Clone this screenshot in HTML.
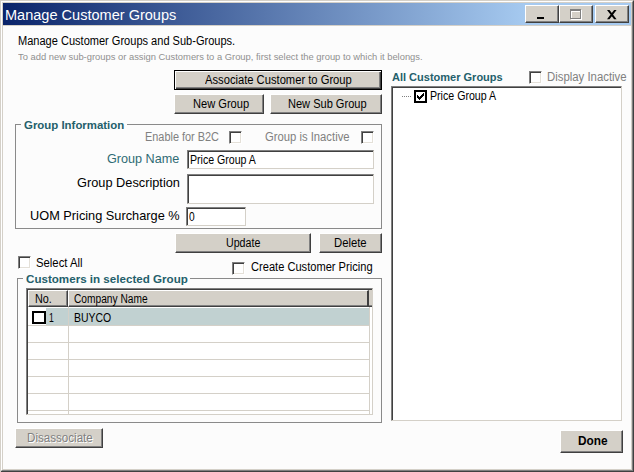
<!DOCTYPE html>
<html><head><meta charset="utf-8">
<style>
*{box-sizing:border-box;margin:0;padding:0}
html,body{width:634px;height:472px;overflow:hidden;background:#fcfcfc}
body{position:relative;font-family:"Liberation Sans",sans-serif;font-size:11.5px;color:#000}
.a{position:absolute}
.t{position:absolute;white-space:nowrap;line-height:16px;transform-origin:0 0}
.btn{position:absolute;background:#d4d0c8;border-style:solid;border-width:1px;border-color:#fff #404040 #404040 #fff;box-shadow:inset -1px -1px 0 #808080}
.cb{position:absolute;width:13px;height:13px;background:#fff;border-style:solid;border-width:1px;border-color:#808080 #fff #fff #808080;box-shadow:inset 1px 1px 0 #404040, inset -1px -1px 0 #e4e0d8}
.grp{position:absolute;border:1px solid #8a8a8a}
.tx{position:absolute;background:#fff;border-style:solid;border-width:1px;border-color:#808080 #d4d0c8 #d4d0c8 #808080;box-shadow:inset 1px 1px 0 #404040}
.gl{position:absolute;background:#d4d0c8}
</style></head><body>
<!-- window frame -->
<div class="a" style="left:0;top:0;width:634px;height:472px;border-style:solid;border-width:1px;border-color:#d4d0c8 #404040 #404040 #d4d0c8"></div>
<div class="a" style="left:1px;top:1px;width:632px;height:470px;border-style:solid;border-width:1px;border-color:#fff #808080 #808080 #fff"></div>
<div class="a" style="left:2px;top:2px;width:630px;height:468px;border:1px solid #d4d0c8"></div>
<div class="a" style="left:0;top:470px;width:1px;height:2px;background:#d4d0c8"></div>
<!-- title bar -->
<div class="a" style="left:3px;top:3px;width:628px;height:22px;background:linear-gradient(90deg,#0a246a 0,#a6caf0 524px,#a6caf0 100%)"></div>
<div class="a" style="left:3px;top:25px;width:628px;height:1px;background:#d4d0c8"></div>
<div class="btn" style="left:525px;top:5px;width:34px;height:18px"><div class="a" style="left:11px;top:11px;width:7px;height:2px;background:#000"></div></div>
<div class="btn" style="left:559px;top:5px;width:34px;height:18px">
  <div class="a" style="left:11px;top:4px;width:11px;height:10px;border:1px solid #fff;border-top-width:2px"></div>
  <div class="a" style="left:10px;top:3px;width:11px;height:10px;border:1px solid #808080;border-top-width:2px"></div>
</div>
<div class="btn" style="left:595px;top:5px;width:34px;height:18px"><svg class="a" style="left:10.7px;top:3.9px" width="10" height="10" viewBox="0 0 10 10"><path d="M0 0H2.5L9.6 9.2H7.1Z M7.1 0H9.6L2.5 9.2H0Z" fill="#000"/></svg></div>

<!-- buttons -->
<div class="btn" style="left:174px;top:70px;width:208px;height:20px;border:1px solid #000;box-shadow:inset 1px 1px 0 #fff, inset -1px -1px 0 #404040, inset -2px -2px 0 #808080"></div>
<div class="btn" style="left:174px;top:94px;width:90px;height:20px"></div>
<div class="btn" style="left:270px;top:94px;width:112px;height:20px"></div>
<div class="btn" style="left:175px;top:233px;width:136px;height:20px"></div>
<div class="btn" style="left:319px;top:233px;width:63px;height:20px"></div>
<div class="btn" style="left:15px;top:428px;width:88px;height:20px"></div>
<div class="btn" style="left:560px;top:430px;width:63px;height:23px"></div>

<!-- right panel -->
<div class="cb" style="left:529px;top:71px"></div>
<div class="tx" style="left:391px;top:86px;width:231px;height:335px"></div>
<div class="a" style="left:402px;top:96px;width:9px;border-top:1px dotted #808080"></div>
<div class="a" style="left:414px;top:90px;width:13px;height:13px;background:#fff;border:2px solid #000"><svg class="a" style="left:1px;top:1px" width="7" height="7" viewBox="0 0 7 7" shape-rendering="crispEdges"><g fill="#000"><rect x="0" y="2" width="1" height="3"/><rect x="1" y="3" width="1" height="3"/><rect x="2" y="4" width="1" height="3"/><rect x="3" y="3" width="1" height="3"/><rect x="4" y="2" width="1" height="3"/><rect x="5" y="1" width="1" height="3"/><rect x="6" y="0" width="1" height="3"/></g></svg></div>

<!-- group info -->
<div class="grp" style="left:15px;top:124px;width:367px;height:105px"></div>
<div class="a" style="left:21px;top:122px;width:106px;height:5px;background:#fcfcfc"></div>
<div class="cb" style="left:229px;top:131px"></div>
<div class="cb" style="left:361px;top:131px"></div>
<div class="tx" style="left:187px;top:150px;width:187px;height:19px"></div>
<div class="tx" style="left:187px;top:174px;width:187px;height:30px"></div>
<div class="tx" style="left:186px;top:207px;width:60px;height:19px"></div>

<div class="cb" style="left:18px;top:256px"></div>
<div class="cb" style="left:232px;top:262px"></div>

<!-- customers group -->
<div class="grp" style="left:17px;top:278px;width:365px;height:145px"></div>
<div class="a" style="left:23px;top:276px;width:167px;height:5px;background:#fcfcfc"></div>
<div class="tx" style="left:26px;top:288px;width:347px;height:127px"></div>
<!-- header -->
<div class="a" style="left:28px;top:290px;width:344px;height:17px;background:#d4d0c8;border-bottom:1px solid #404040;box-shadow:inset 0 -1px 0 #808080"></div>
<div class="a" style="left:28px;top:290px;width:40px;height:17px;border-style:solid;border-width:1px;border-color:#fff #404040 #404040 #fff;box-shadow:inset -1px -1px 0 #808080"></div>
<div class="a" style="left:68px;top:290px;width:301px;height:17px;border-style:solid;border-width:1px 2px 1px 1px;border-color:#fff #404040 #404040 #fff;box-shadow:inset 0 -1px 0 #808080"></div>
<!-- rows -->
<div class="a" style="left:46px;top:308px;width:323px;height:17px;background:#c1d1d1"></div>
<div class="a" style="left:32px;top:311px;width:14px;height:13px;background:#fff;border:2px solid #000"></div>
<div class="gl" style="left:68px;top:307px;width:1px;height:107px"></div>
<div class="gl" style="left:369px;top:307px;width:1px;height:107px"></div>
<div class="gl" style="left:28px;top:325px;width:342px;height:1px"></div>
<div class="gl" style="left:28px;top:342px;width:342px;height:1px"></div>
<div class="gl" style="left:28px;top:359px;width:342px;height:1px"></div>
<div class="gl" style="left:28px;top:376px;width:342px;height:1px"></div>
<div class="gl" style="left:28px;top:393px;width:342px;height:1px"></div>
<div class="gl" style="left:28px;top:410px;width:342px;height:1px"></div>

<div class="t" style="left:5.06px;top:7px;font-size:15.5px;font-weight:normal;color:#fff;transform:scaleX(0.9379);">Manage Customer Groups</div>
<div class="t" style="left:18.08px;top:33px;font-size:12px;font-weight:normal;color:#000;transform:scaleX(0.9197);">Manage Customer Groups and Sub-Groups.</div>
<div class="t" style="left:18.30px;top:49px;font-size:9.5px;font-weight:normal;color:#909090;transform:scaleX(0.9861);">To add new sub-groups or assign Customers to a Group, first select the group to which it belongs.</div>
<div class="t" style="left:204.70px;top:72px;font-size:12px;font-weight:normal;color:#000;transform:scaleX(0.9325);">Associate Customer to Group</div>
<div class="t" style="left:192.67px;top:96px;font-size:12px;font-weight:normal;color:#000;transform:scaleX(0.9250);">New Group</div>
<div class="t" style="left:287.78px;top:96px;font-size:12px;font-weight:normal;color:#000;transform:scaleX(0.9202);">New Sub Group</div>
<div class="t" style="left:392.40px;top:69px;font-size:11.5px;font-weight:bold;color:#24606b;transform:scaleX(0.9569);">All Customer Groups</div>
<div class="t" style="left:547.05px;top:69px;font-size:12px;font-weight:normal;color:#808080;transform:scaleX(0.9470);">Display Inactive</div>
<div class="t" style="left:429.61px;top:88px;font-size:12px;font-weight:normal;color:#000;transform:scaleX(0.8851);">Price Group A</div>
<div class="t" style="left:23.80px;top:117px;font-size:11.5px;font-weight:bold;color:#24606b;transform:scaleX(0.9931);">Group Information</div>
<div class="t" style="left:144.79px;top:129px;font-size:12px;font-weight:normal;color:#808080;transform:scaleX(0.9088);">Enable for B2C</div>
<div class="t" style="left:265.20px;top:129px;font-size:12px;font-weight:normal;color:#808080;transform:scaleX(0.9389);">Group is Inactive</div>
<div class="t" style="left:106.80px;top:151px;font-size:13px;font-weight:normal;color:#2f6b74;transform:scaleX(0.9703);">Group Name</div>
<div class="t" style="left:77.40px;top:175px;font-size:13px;font-weight:normal;color:#000;transform:scaleX(0.9827);">Group Description</div>
<div class="t" style="left:29.82px;top:208px;font-size:13px;font-weight:normal;color:#000;transform:scaleX(0.9815);">UOM Pricing Surcharge %</div>
<div class="t" style="left:189.72px;top:152px;font-size:12px;font-weight:normal;color:#000;transform:scaleX(0.8824);">Price Group A</div>
<div class="t" style="left:189.30px;top:209px;font-size:12.5px;font-weight:normal;color:#000;transform:scaleX(0.8143);">0</div>
<div class="t" style="left:226.01px;top:235px;font-size:12px;font-weight:normal;color:#000;transform:scaleX(0.8868);">Update</div>
<div class="t" style="left:334.06px;top:235px;font-size:12px;font-weight:normal;color:#000;transform:scaleX(0.9412);">Delete</div>
<div class="t" style="left:36.30px;top:255px;font-size:12px;font-weight:normal;color:#000;transform:scaleX(0.9429);">Select All</div>
<div class="t" style="left:250.50px;top:259px;font-size:12px;font-weight:normal;color:#000;transform:scaleX(0.9252);">Create Customer Pricing</div>
<div class="t" style="left:26.20px;top:271px;font-size:11.5px;font-weight:bold;color:#24606b;transform:scaleX(1.0088);">Customers in selected Group</div>
<div class="t" style="left:34.50px;top:291px;font-size:12px;font-weight:normal;color:#000;transform:scaleX(0.9000);">No.</div>
<div class="t" style="left:74.20px;top:291px;font-size:12px;font-weight:normal;color:#000;transform:scaleX(0.8483);">Company Name</div>
<div class="t" style="left:49.28px;top:310px;font-size:12px;font-weight:normal;color:#000;transform:scaleX(0.7200);">1</div>
<div class="t" style="left:73.63px;top:310px;font-size:12px;font-weight:normal;color:#000;transform:scaleX(0.8707);">BUYCO</div>
<div class="t" style="left:27.03px;top:430px;font-size:12px;font-weight:normal;color:#808080;transform:scaleX(0.9672);text-shadow:1px 1px 0 #fff;">Disassociate</div>
<div class="t" style="left:577.90px;top:433px;font-size:12px;font-weight:bold;color:#000;transform:scaleX(0.9867);">Done</div>
</body></html>
